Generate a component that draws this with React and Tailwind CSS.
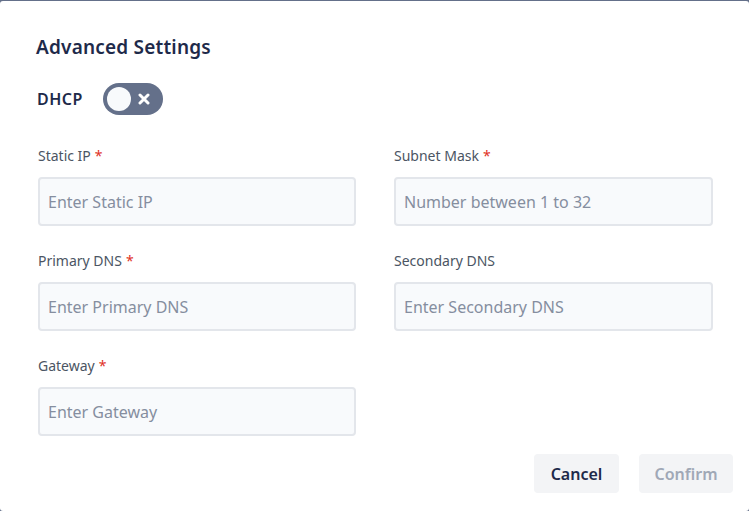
import React from 'react';

function Field({ label, required, placeholder }) {
    return (
        <div className="flex flex-col">
            <label className="text-sm leading-5 text-[#4b5563] h-5">
                {label}
                {required && <span className="text-[#e0321f] ml-1">*</span>}
            </label>
            <input
                className="mt-[11px] h-[49px] w-full rounded-[4px] border-2 border-[#e3e6eb] bg-[#f8fafc] px-[8px] text-base text-[#1e2a4a] placeholder:text-[#858e9f] outline-none"
                placeholder={placeholder}
            />
        </div>
    );
}

export default function App() {
    return (
        <div className="h-[511px] w-[749px] bg-[#64708a] pt-px" style={{ fontFamily: '"Noto Sans", sans-serif' }}>
            <div className="h-[510px] rounded-[3px] bg-white flex flex-col">
                <div className="pl-9 pr-9 pt-8">
                    <h2 className="text-[19px] leading-7 font-semibold text-[#1e2a4a] tracking-[0.2px]">Advanced Settings</h2>
                    <div className="mt-[22px] flex items-center gap-[20px]">
                        <span className="text-base font-semibold text-[#1e2a4a] pl-px tracking-[0.5px]">DHCP</span>
                        <div className="relative h-8 w-[60px] rounded-full bg-[#64708a]">
                            <div className="absolute left-[4px] top-[4px] h-6 w-6 rounded-full bg-[#f8fafc]" />
                            <svg className="absolute left-[35px] top-[10px]" width="12" height="12" viewBox="0 0 12 12">
                                <path d="M2 2 L10 10 M10 2 L2 10" stroke="white" strokeWidth="3" strokeLinecap="round" />
                            </svg>
                        </div>
                    </div>
                    <div className="mt-[31px] grid grid-cols-[318px_319px] gap-x-[38px] gap-y-[25px] pl-[2px]">
                        <Field label="Static IP" required placeholder="Enter Static IP" />
                        <Field label="Subnet Mask" required placeholder="Number between 1 to 32" />
                        <Field label="Primary DNS" required placeholder="Enter Primary DNS" />
                        <Field label="Secondary DNS" placeholder="Enter Secondary DNS" />
                        <Field label="Gateway" required placeholder="Enter Gateway" />
                    </div>
                </div>
                <div className="mt-[18px] flex justify-end gap-5 pr-4">
                    <button className="h-[39px] w-[85px] rounded-[4px] bg-[#f3f4f6] text-base font-semibold text-[#1e2a4a]">Cancel</button>
                    <button className="h-[39px] w-[94px] rounded-[4px] bg-[#f3f4f6] text-base font-semibold text-[#a0a8b6]">Confirm</button>
                </div>
            </div>
        </div>
    );
}
